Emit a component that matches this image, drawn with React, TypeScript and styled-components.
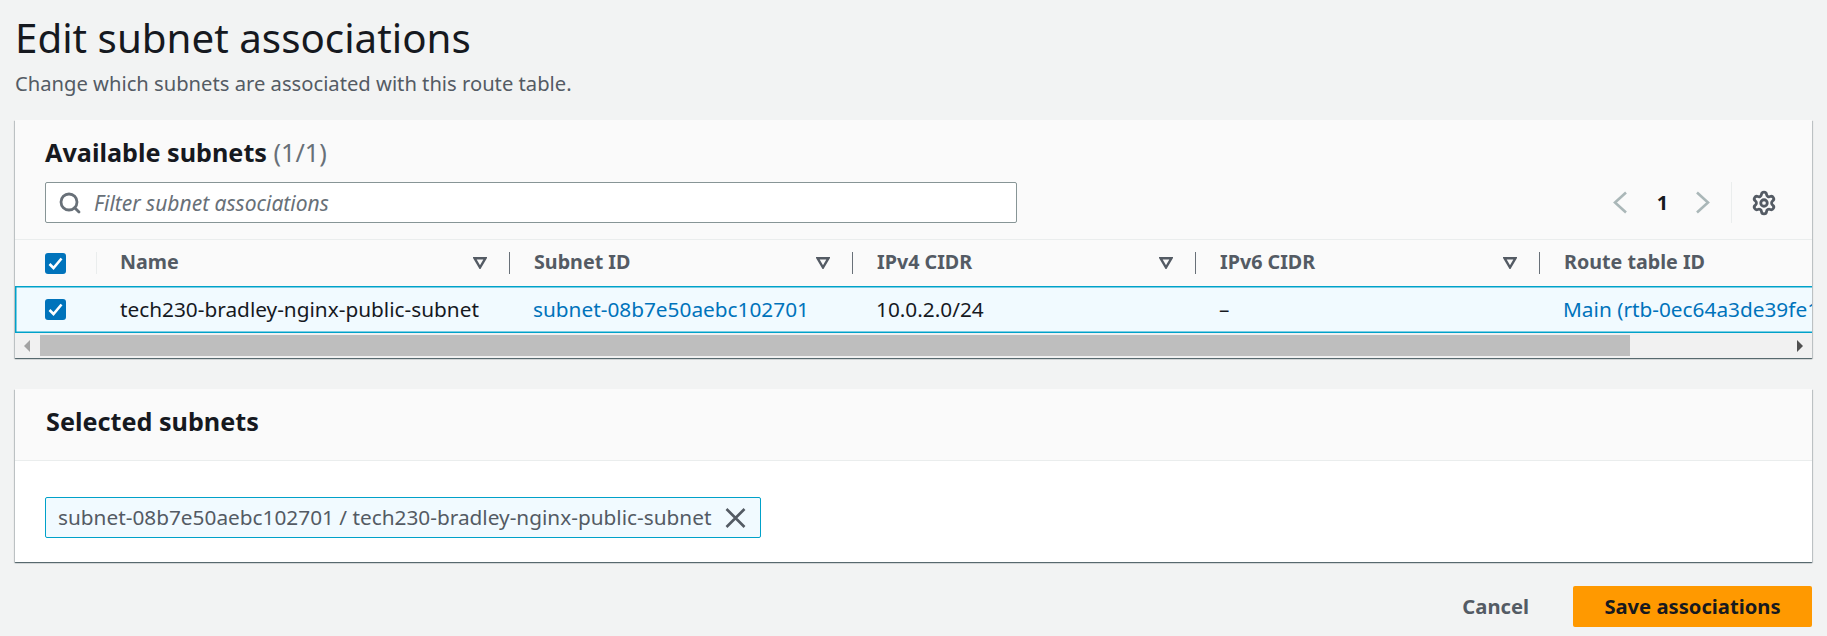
import React from 'react'
import styled, { createGlobalStyle } from 'styled-components'
import { Search, Settings } from 'lucide-react'

const TEXT = '#16191f'
const MUTED = '#545b64'
const LINK = '#0073bb'
const DIVIDER = '#eaeded'
const SELECTED = '#00a1c9'

const GlobalStyle = createGlobalStyle`
  html, body {
    margin: 0;
    height: 636px;
    overflow: hidden;
    background: #f2f3f3;
    font-family: "Noto Sans", "Liberation Sans", sans-serif;
    color: ${TEXT};
  }
  * { box-sizing: border-box; }
`

const Page = styled.main`
  padding: 18px 15px 0;
`

const Title = styled.h1`
  margin: 0;
  font-size: 40.3px;
  line-height: 40px;
  font-weight: 400;
`

const Description = styled.p`
  margin: 13px 0 0;
  font-size: 20.2px;
  line-height: 24px;
  color: ${MUTED};
`

const Card = styled.section<{ $gap: number }>`
  margin-top: ${(p) => p.$gap}px;
  background: #fff;
  box-shadow: 0 1px 1px 0 rgba(0, 28, 36, 0.5), 1px 1px 1px 0 rgba(0, 28, 36, 0.15), -1px 1px 1px 0 rgba(0, 28, 36, 0.15);
  overflow: hidden;
`

const CardHeader = styled.header`
  background: #fafafa;
  border-bottom: 1px solid ${DIVIDER};
  padding: 19px 30px 16px;
`

const SelectedHeader = styled(CardHeader)`
  height: 72px;
  padding: 19px 31px 0;
`

const Heading = styled.h2`
  margin: 0;
  font-size: 25.2px;
  line-height: 26px;
  font-weight: 700;
  span {
    font-weight: 400;
    color: #687078;
  }
`

const Toolbar = styled.div`
  margin-top: 17px;
  display: flex;
  align-items: stretch;
  height: 41px;
`

const FilterBox = styled.label`
  width: 972px;
  display: flex;
  align-items: center;
  gap: 12px;
  padding-left: 12px;
  background: #fff;
  border: 1px solid #879596;
  border-radius: 2px;
  color: #687078;
`

const FilterInput = styled.input`
  flex: 1;
  border: 0;
  outline: 0;
  padding: 0;
  background: none;
  font: italic 400 21px "Noto Sans", sans-serif;
  &::placeholder {
    color: #687078;
    opacity: 1;
  }
`

const Pagination = styled.div`
  margin-left: auto;
  display: flex;
  align-items: center;
  margin-right: 5px;
`

const PageNumber = styled.span`
  width: 67px;
  padding-left: 2px;
  text-align: center;
  font-size: 20px;
  font-weight: 700;
`

const PrefsButton = styled.div`
  margin-left: 21px;
  padding-left: 19px;
  height: 41px;
  display: flex;
  align-items: center;
  border-left: 1px solid ${DIVIDER};
  color: ${MUTED};
`

const Row = styled.div`
  display: flex;
  align-items: center;
  white-space: nowrap;
`

const HeaderRow = styled(Row)`
  height: 46px;
  background: #fafafa;
`

const DataRow = styled(Row)`
  height: 47px;
  background: #f1faff;
  box-shadow: inset 1.5px 0 0 ${SELECTED}, inset 0 1.5px 0 ${SELECTED}, inset 0 -1.5px 0 ${SELECTED};
`

const CheckCell = styled.div`
  width: 81px;
  flex: none;
  padding-left: 30px;
  display: flex;
`

const Checkbox = styled.span`
  width: 21px;
  height: 21px;
  border-radius: 3px;
  background: ${LINK};
  display: flex;
  align-items: center;
  justify-content: center;
`

const HeadCell = styled.div<{ $width?: number; $first?: boolean }>`
  flex: ${(p) => (p.$width ? `0 0 ${p.$width}px` : '1 0 0')};
  min-width: 0;
  height: 22px;
  display: flex;
  align-items: center;
  justify-content: space-between;
  padding: 0 22px 0 ${(p) => (p.$first ? 23 : 24)}px;
  font-size: 19.7px;
  line-height: 20px;
  font-weight: 700;
  color: ${MUTED};
  border-left: 1px solid ${(p) => (p.$first ? DIVIDER : '#687078')};
`

const HeadLabel = styled.span`
  margin-top: -2px;
`

const Cell = styled.div<{ $width?: number; $link?: boolean }>`
  flex: ${(p) => (p.$width ? `0 0 ${p.$width}px` : '1 0 0')};
  min-width: 0;
  overflow: hidden;
  padding: 0 0 2px 24px;
  font-size: 20.8px;
  color: ${(p) => (p.$link ? LINK : TEXT)};
`

const ScrollBar = styled.div`
  height: 25px;
  display: flex;
  align-items: center;
  justify-content: space-between;
  background: #f1f1f1;
  padding: 2px 9px 2px 0;
`

const ScrollArrow = styled.span<{ $right?: boolean }>`
  width: 0;
  height: 0;
  border-top: 6px solid transparent;
  border-bottom: 6px solid transparent;
  ${(p) => (p.$right ? 'border-left: 6px solid #505050;' : 'border-right: 6px solid #a3a3a3; margin-left: 9px;')}
`

const ScrollThumb = styled.span`
  margin-left: 10px;
  margin-right: auto;
  width: 1590px;
  height: 21px;
  background: #bebebe;
`

const CardBody = styled.div`
  padding: 36px 30px 24px;
`

const Token = styled.div`
  display: inline-flex;
  align-items: center;
  gap: 14px;
  height: 41px;
  padding: 0 14px 0 12px;
  background: #f1faff;
  border: 1px solid ${SELECTED};
  border-radius: 2px;
  font-size: 20.8px;
  white-space: nowrap;
  color: ${MUTED};
`

const TokenLabel = styled.span`
  margin-top: -2px;
`

const Footer = styled.footer`
  margin-top: 24px;
  display: flex;
  justify-content: flex-end;
  align-items: center;
  gap: 44px;
`

const CancelButton = styled.button`
  border: 0;
  background: none;
  padding: 0 0 2px;
  font: 700 20.2px "Noto Sans", sans-serif;
  color: ${MUTED};
`

const SaveButton = styled.button`
  width: 239px;
  height: 41px;
  border: 0;
  border-radius: 2px;
  padding: 0 0 2px;
  background: #ff9900;
  font: 700 20.2px "Noto Sans", sans-serif;
  color: ${TEXT};
`

const Check = () => (
  <svg width="15" height="15" viewBox="0 0 15 15" fill="none" stroke="#fff" strokeWidth="2.6">
    <path d="M1.5 8 L5.5 12 L13.5 2.5" />
  </svg>
)

const FilterIcon = () => (
  <svg width="14" height="12" viewBox="0 0 14 12" fill="none" stroke={MUTED} strokeWidth="2.4">
    <path d="M1.5 1.2 H12.5 L7 10.5 Z" />
  </svg>
)

const Chevron = ({ right }: { right?: boolean }) => (
  <svg width="15" height="23" viewBox="0 0 15 23" fill="none" stroke="#aab7b8" strokeWidth="2.6">
    <path d={right ? 'M2 1.5 L13 11.5 L2 21.5' : 'M13 1.5 L2 11.5 L13 21.5'} />
  </svg>
)

const Dismiss = () => (
  <svg width="21" height="20" viewBox="0 0 21 20" fill="none" stroke={MUTED} strokeWidth="2.6">
    <path d="M1.5 1 L19.5 19 M19.5 1 L1.5 19" />
  </svg>
)

const columns = [
  { label: 'Name', width: 413 },
  { label: 'Subnet ID', width: 343 },
  { label: 'IPv4 CIDR', width: 343 },
  { label: 'IPv6 CIDR', width: 344 },
  { label: 'Route table ID' },
]

export default function App() {
  return (
    <Page>
      <GlobalStyle />
      <Title>Edit subnet associations</Title>
      <Description>Change which subnets are associated with this route table.</Description>

      <Card $gap={25}>
        <CardHeader>
          <Heading>
            Available subnets <span>(1/1)</span>
          </Heading>
          <Toolbar>
            <FilterBox>
              <Search size={24} strokeWidth={2.8} />
              <FilterInput placeholder="Filter subnet associations" />
            </FilterBox>
            <Pagination>
              <Chevron />
              <PageNumber>1</PageNumber>
              <Chevron right />
              <PrefsButton>
                <Settings size={26} strokeWidth={2.6} />
              </PrefsButton>
            </Pagination>
          </Toolbar>
        </CardHeader>

        <HeaderRow>
          <CheckCell>
            <Checkbox>
              <Check />
            </Checkbox>
          </CheckCell>
          {columns.map((col, i) => (
            <HeadCell key={col.label} $width={col.width} $first={i === 0}>
              <HeadLabel>{col.label}</HeadLabel>
              {col.width && <FilterIcon />}
            </HeadCell>
          ))}
        </HeaderRow>
        <DataRow>
          <CheckCell>
            <Checkbox>
              <Check />
            </Checkbox>
          </CheckCell>
          <Cell $width={413}>tech230-bradley-nginx-public-subnet</Cell>
          <Cell $width={343} $link>subnet-08b7e50aebc102701</Cell>
          <Cell $width={343}>10.0.2.0/24</Cell>
          <Cell $width={344}>–</Cell>
          <Cell $link>Main (rtb-0ec64a3de39fe1</Cell>
        </DataRow>
        <ScrollBar>
          <ScrollArrow />
          <ScrollThumb />
          <ScrollArrow $right />
        </ScrollBar>
      </Card>

      <Card $gap={31}>
        <SelectedHeader>
          <Heading>Selected subnets</Heading>
        </SelectedHeader>
        <CardBody>
          <Token>
            <TokenLabel>subnet-08b7e50aebc102701 / tech230-bradley-nginx-public-subnet</TokenLabel>
            <Dismiss />
          </Token>
        </CardBody>
      </Card>

      <Footer>
        <CancelButton>Cancel</CancelButton>
        <SaveButton>Save associations</SaveButton>
      </Footer>
    </Page>
  )
}
